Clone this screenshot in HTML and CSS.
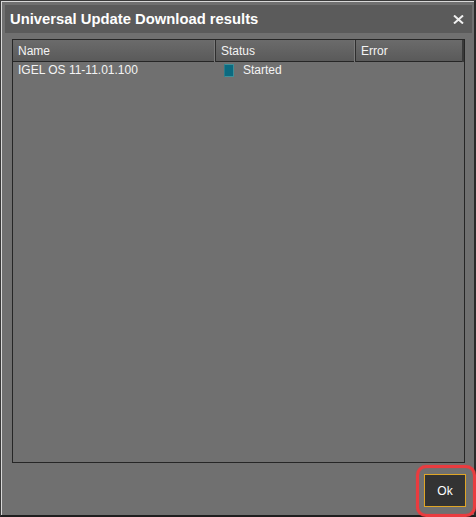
FILE: index.html
```html
<!DOCTYPE html>
<html>
<head>
<meta charset="utf-8">
<link rel="stylesheet" href="styles.css">
</head>
<body>
<div class="window">
  <div class="titlebar">
    <span class="title">Universal Update Download results</span>
    <svg class="close" width="11" height="9" viewBox="0 0 11 9"><path d="M1 0.5L10 8.5M10 0.5L1 8.5" stroke="#f0f0f0" stroke-width="2"/></svg>
  </div>
  <div class="content">
    <div class="table">
      <div class="thead">
        <div class="th c1">Name</div>
        <div class="th c2">Status</div>
        <div class="th c3">Error</div>
      </div>
      <div class="row">
        <div class="td c1">IGEL OS 11-11.01.100</div>
        <div class="td c2"><span class="status-icon"></span>Started</div>
        <div class="td c3"></div>
      </div>
    </div>
    <div class="footer">
      <div class="btn-wrap"><button class="ok">Ok</button></div>
    </div>
  </div>
</div>
</body>
</html>
```
FILE: styles.css
```css
html, body {
  margin: 0;
  padding: 0;
  background: #2a2a2a;
}
body {
  font-family: "Liberation Sans", Arial, sans-serif;
  width: 476px;
  height: 517px;
  overflow: hidden;
}
.window {
  box-sizing: border-box;
  width: 476px;
  height: 517px;
  background: #707070;
  border-top: 1px solid #3a3a3a;
  border-left: 1px solid #3a3a3a;
  border-right: 2px solid #2a2a2a;
  border-bottom: 2px solid #1e1e1e;
  box-shadow: inset 1px 1px 0 #d8d8d8;
  display: flex;
  flex-direction: column;
  padding: 4px 2px 0 4px;
}
.titlebar {
  height: 28px;
  background: #5b5b5b;
  display: flex;
  align-items: center;
  justify-content: space-between;
  padding: 0 8px 0 5px;
  flex: none;
}
.title {
  color: #ffffff;
  font-weight: bold;
  font-size: 14.8px;
}
.close { display: block; }
.content {
  flex: 1;
  display: flex;
  flex-direction: column;
  padding: 6px 7px 0 7px;
}
.table {
  height: 424px;
  border: 1px solid #262626;
  box-sizing: border-box;
  display: flex;
  flex-direction: column;
}
.thead {
  display: grid;
  grid-template-columns: 203px 140px 1fr;
  height: 21px;
  background: linear-gradient(#6b6b6b, #5a5a5a);
  border-bottom: 1px solid #262626;
}
.th {
  color: #f4f4f4;
  font-size: 12px;
  line-height: 22px;
  padding-left: 5px;
  border-right: 1px solid #2e2e2e;
  box-shadow: inset -1px 0 0 #7a7a7a;
}
.th.c3 { border-right: none; box-shadow: inset -2px 0 0 #3a3a3a; }
.row {
  display: grid;
  grid-template-columns: 203px 140px 1fr;
  height: 16px;
}
.td {
  color: #f4f4f4;
  font-size: 12px;
  line-height: 16px;
  padding-left: 5px;
  display: flex;
  align-items: center;
}
.status-icon {
  width: 8px;
  height: 11px;
  background: #0b6a80;
  border: 1px solid #3f8f98;
  border-left-color: #2a7a88;
  margin: 0 9px 0 3px;
}
.footer {
  display: flex;
  justify-content: flex-end;
  padding: 11px 0 0 0;
  margin-right: -1px;
}
.btn-wrap {
  position: relative;
}
.btn-wrap::after {
  content: "";
  position: absolute;
  left: -8px;
  top: -9px;
  right: -10px;
  bottom: -10px;
  border: 3px solid #ea3b3f;
  border-radius: 10px;
  box-shadow: 0 0 1px #ea3b3f, inset 0 0 1px #ea3b3f;
  pointer-events: none;
}
.ok {
  display: block;
  box-sizing: border-box;
  width: 42px;
  height: 33px;
  background: #333333;
  border: 1px solid #e0a626;
  color: #ffffff;
  font-family: "Liberation Sans", Arial, sans-serif;
  font-size: 12px;
  padding: 0;
}
```
